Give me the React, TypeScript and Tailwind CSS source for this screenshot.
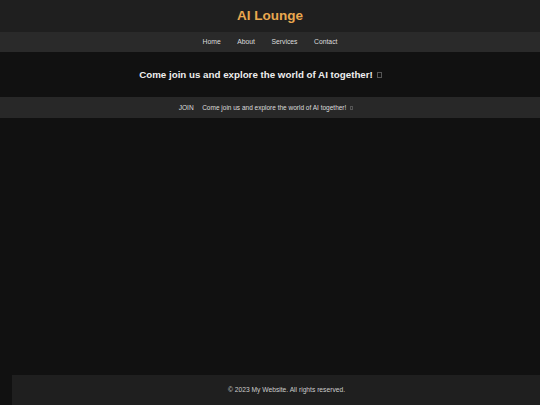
// AI Lounge landing: header, nav, hero line, join strip, footer

const font = { fontFamily: '"Liberation Sans", Arial, sans-serif' };

const Tofu = ({ size }: { size: string }) => (
  <span className={`ml-[4px] inline-block border border-[#555] align-middle ${size}`} />
);

const links = ['Home', 'About', 'Services', 'Contact'];

export default function App() {
  return (
    <div
      className="flex h-[405px] w-[540px] flex-col overflow-hidden bg-[#111111] text-white"
      style={font}
    >
      <header className="flex h-[32px] shrink-0 items-center justify-center bg-[#1f1f1f]">
        <h1 className="text-[13.5px] font-bold leading-none text-[#e9a84f]">AI Lounge</h1>
      </header>

      <nav className="flex h-[20px] shrink-0 items-center justify-center gap-[16.5px] bg-[#2a2a2a] text-[6.8px] text-[#dddddd]">
        {links.map((l) => (
          <span key={l}>{l}</span>
        ))}
      </nav>

      <section className="flex h-[45px] shrink-0 items-center justify-center pr-[19px]">
        <h2 className="flex items-center text-[9.75px] font-bold leading-none text-[#eeeeee]">
          Come join us and explore the world of AI together!
          <Tofu size="h-[6px] w-[5px]" />
        </h2>
      </section>

      <div className="flex h-[21px] shrink-0 items-center justify-center gap-[8.5px] bg-[#282828] pr-[8px] text-[#dddddd]">
        <span className="text-[6.6px]">JOIN</span>
        <span className="flex items-center text-[6.5px]">
          Come join us and explore the world of AI together!
          <Tofu size="h-[4px] w-[3px]" />
        </span>
      </div>

      <main className="flex-1" />

      <footer className="ml-[12px] flex h-[30px] w-[549px] shrink-0 items-center justify-center bg-[#1f1f1f] text-[6.7px] text-[#cccccc]">
        © 2023 My Website. All rights reserved.
      </footer>
    </div>
  );
}
